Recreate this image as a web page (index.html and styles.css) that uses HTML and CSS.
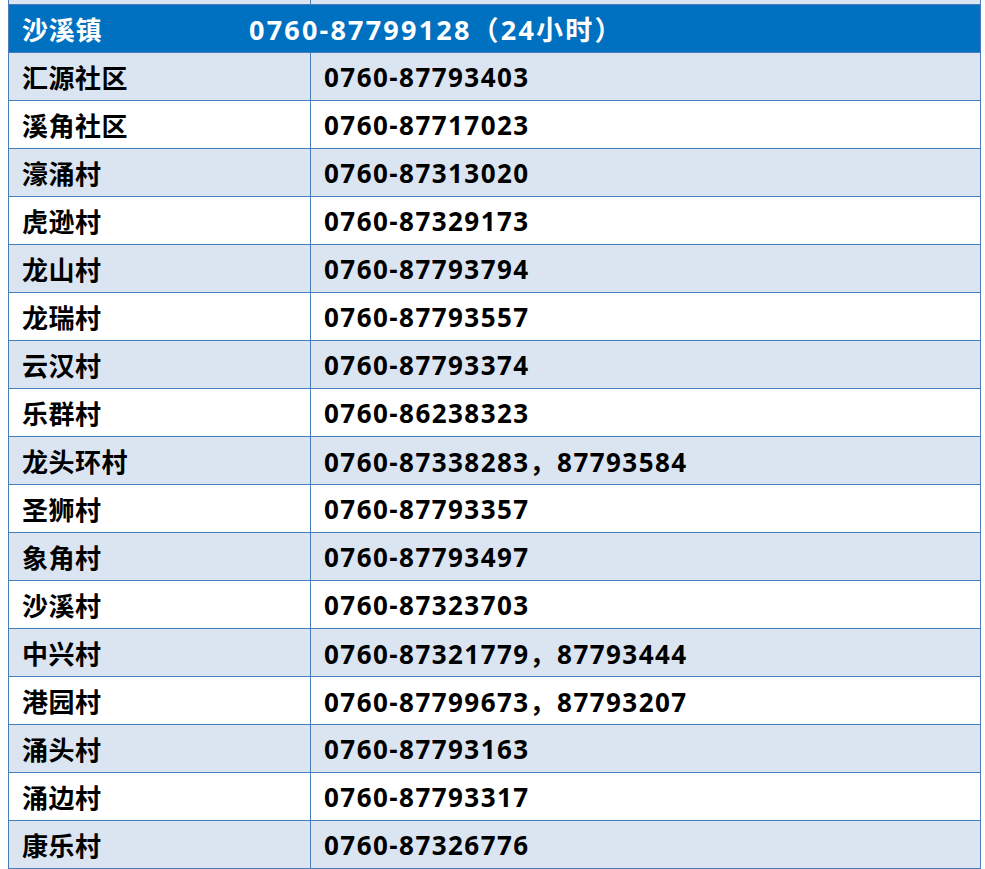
FILE: index.html
```html
<!DOCTYPE html>
<html lang="zh-CN">
<head>
<meta charset="utf-8">
<title>沙溪镇</title>
<link rel="stylesheet" href="styles.css">
</head>
<body>
<div class="table">
  <div class="row top"><div class="c1"></div><div class="c2"></div></div>
  <div class="row head"><span class="town">沙溪镇</span><span class="hnum">0760-87799128（24小时）</span></div>
  <div class="row alt"><div class="c1">汇源社区</div><div class="c2">0760-87793403</div></div>
  <div class="row"><div class="c1">溪角社区</div><div class="c2">0760-87717023</div></div>
  <div class="row alt"><div class="c1">濠涌村</div><div class="c2">0760-87313020</div></div>
  <div class="row"><div class="c1">虎逊村</div><div class="c2">0760-87329173</div></div>
  <div class="row alt"><div class="c1">龙山村</div><div class="c2">0760-87793794</div></div>
  <div class="row"><div class="c1">龙瑞村</div><div class="c2">0760-87793557</div></div>
  <div class="row alt"><div class="c1">云汉村</div><div class="c2">0760-87793374</div></div>
  <div class="row"><div class="c1">乐群村</div><div class="c2">0760-86238323</div></div>
  <div class="row alt"><div class="c1">龙头环村</div><div class="c2">0760-87338283，87793584</div></div>
  <div class="row"><div class="c1">圣狮村</div><div class="c2">0760-87793357</div></div>
  <div class="row alt"><div class="c1">象角村</div><div class="c2">0760-87793497</div></div>
  <div class="row"><div class="c1">沙溪村</div><div class="c2">0760-87323703</div></div>
  <div class="row alt"><div class="c1">中兴村</div><div class="c2">0760-87321779，87793444</div></div>
  <div class="row"><div class="c1">港园村</div><div class="c2">0760-87799673，87793207</div></div>
  <div class="row alt"><div class="c1">涌头村</div><div class="c2">0760-87793163</div></div>
  <div class="row"><div class="c1">涌边村</div><div class="c2">0760-87793317</div></div>
  <div class="row alt"><div class="c1">康乐村</div><div class="c2">0760-87326776</div></div>
</div>
</body>
</html>
```

FILE: styles.css
```css
html, body {
  margin: 0;
  padding: 0;
  background: #ffffff;
}
body {
  font-family: "Open Sans", "Noto Sans CJK SC", sans-serif;
  font-weight: 700;
  font-size: 26px;
  color: #000000;
}
.table {
  margin-left: 8px;
  width: 973px;
  box-sizing: border-box;
  border-left: 1px solid #4a7ebb;
  border-right: 1px solid #4a7ebb;
}
.row {
  display: grid;
  grid-template-columns: 302px 1fr;
  height: 48px;
  box-sizing: border-box;
  border-bottom: 1px solid #4a7ebb;
  background: #ffffff;
}
.row.alt, .row.top {
  background: #dbe5f1;
}
.row.top {
  height: 5px;
}
.c1 {
  border-right: 1px solid #4a7ebb;
  box-sizing: border-box;
  padding-left: 13px;
  display: flex;
  align-items: center;
  white-space: nowrap;
  letter-spacing: 0.5px;
}
.c2 {
  padding-left: 13px;
  display: flex;
  align-items: center;
  white-space: nowrap;
  letter-spacing: 1.45px;
}
.row.head {
  display: flex;
  align-items: center;
  background: #0070c0;
  color: #ffffff;
}
.town {
  padding-left: 13px;
  width: 227px;
  letter-spacing: 0.8px;
}
.hnum {
  font-size: 27px;
  letter-spacing: 2.2px;
  white-space: nowrap;
}
```
